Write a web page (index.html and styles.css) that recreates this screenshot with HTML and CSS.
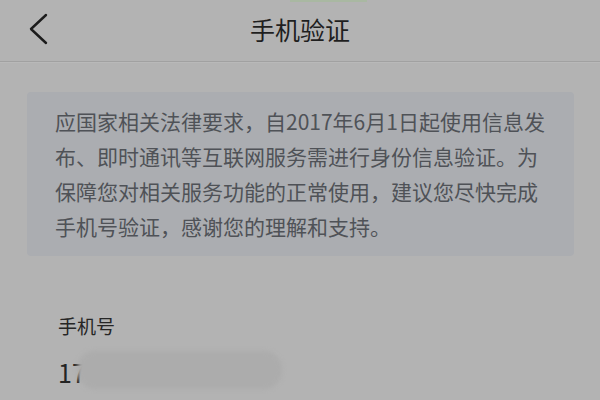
FILE: index.html
```html
<!DOCTYPE html>
<html lang="zh-CN">
<head>
<meta charset="utf-8">
<title>手机验证</title>
<link rel="stylesheet" href="styles.css">
</head>
<body>
<div class="status-tint"></div>
<header class="topbar">
  <div class="back">
    <svg class="back-icon" width="24" height="34" viewBox="0 0 24 34" aria-hidden="true">
      <path d="M19 3 L4 17 L19 31" fill="none" stroke="#1c1c1c" stroke-width="2.4" stroke-linecap="round" stroke-linejoin="round"/>
    </svg>
  </div>
  <h1 class="title">手机验证</h1>
  <div class="spacer"></div>
</header>
<main class="content">
  <section class="notice">
    <p>应国家相关法律要求，自2017年6月1日起使用信息发<br>布、即时通讯等互联网服务需进行身份信息验证。为<br>保障您对相关服务功能的正常使用，建议您尽快完成<br>手机号验证，感谢您的理解和支持。</p>
  </section>
  <section class="field">
    <div class="label">手机号</div>
    <div class="phone">
      <span class="phone-num">17</span>
      <span class="mask"></span>
    </div>
  </section>
</main>
</body>
</html>
```

FILE: styles.css
```css
html, body {
  margin: 0;
  padding: 0;
}
body {
  width: 600px;
  height: 400px;
  overflow: hidden;
  background: #b3b3b3;
  font-family: "Noto Sans CJK SC", "Noto Sans", sans-serif;
  position: relative;
}
.status-tint {
  position: absolute;
  left: 290px;
  top: 0;
  width: 77px;
  height: 2px;
  background: #a9b8a2;
}
.topbar {
  height: 57px;
  padding-bottom: 4px;
  display: grid;
  grid-template-columns: 1fr auto 1fr;
  align-items: center;
  border-bottom: 1px solid #a1a1a1;
  box-shadow: 0 1px 0 #b9b9b9;
}
.back {
  padding-left: 27px;
  display: flex;
  align-items: center;
}
.back-icon {
  display: block;
}
.title {
  margin: 0;
  font-size: 25px;
  font-weight: 400;
  line-height: 34px;
  color: #1f1f1f;
}
.content {
  padding: 30px 26px 0 27px;
}
.notice {
  background: #abadb1;
  border-radius: 4px;
  padding: 12px 28px;
}
.notice p {
  margin: 0;
  font-size: 21px;
  line-height: 35px;
  color: #4f5257;
  white-space: nowrap;
}
.field {
  padding-left: 31px;
  margin-top: 57px;
}
.label {
  font-size: 19px;
  line-height: 26px;
  color: #262626;
}
.phone {
  margin-top: 16px;
  position: relative;
  height: 34px;
}
.phone-num {
  font-size: 25px;
  line-height: 34px;
  color: #242424;
}
.mask {
  position: absolute;
  left: 19px;
  top: -4px;
  width: 205px;
  height: 38px;
  border-radius: 18px;
  background: #acacac;
  filter: blur(2px);
}
```
